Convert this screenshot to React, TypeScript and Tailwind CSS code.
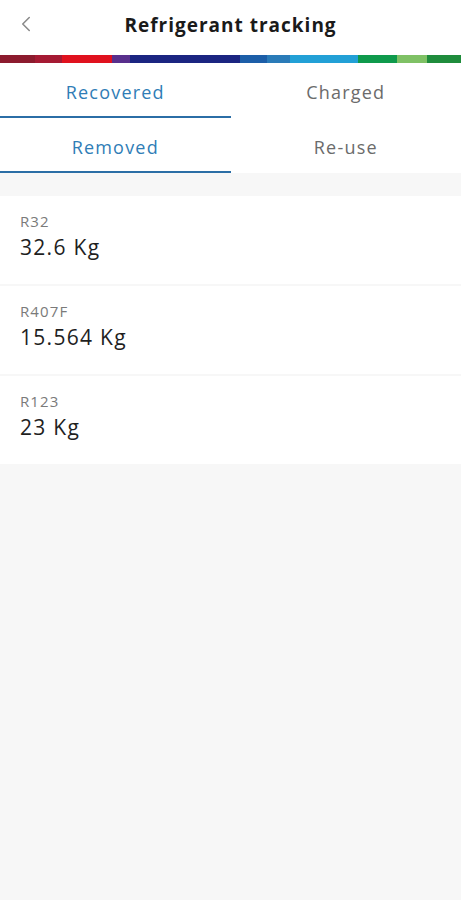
import { ChevronLeft } from "lucide-react";

const stripes = [
  { w: 35, c: "bg-[#8c1b2e]" },
  { w: 27, c: "bg-[#a51a33]" },
  { w: 50, c: "bg-[#e0111e]" },
  { w: 18, c: "bg-[#582f8c]" },
  { w: 110, c: "bg-[#1b2581]" },
  { w: 27, c: "bg-[#1c5ea8]" },
  { w: 23, c: "bg-[#2a7bb8]" },
  { w: 68, c: "bg-[#22a0d6]" },
  { w: 39, c: "bg-[#0f9a4c]" },
  { w: 30, c: "bg-[#7fc165]" },
  { w: 34, c: "bg-[#1f8c3c]" },
];

const items = [
  { name: "R32", amount: "32.6 Kg" },
  { name: "R407F", amount: "15.564 Kg" },
  { name: "R123", amount: "23 Kg" },
];

function Tab({ label, active }: { label: string; active?: boolean }) {
  return (
    <button
      className={
        active
          ? "flex h-[55px] flex-1 items-center justify-center border-b-2 border-[#2b6ea6] pt-[5px] text-[18px] tracking-[1.2px] text-[#2f7db6]"
          : "flex h-[55px] flex-1 items-center justify-center border-b-2 border-transparent pt-[5px] text-[18px] tracking-[1.2px] text-[#6b6b6b]"
      }
    >
      {label}
    </button>
  );
}

export default function App() {
  return (
    <div className="flex min-h-[900px] flex-col bg-[#f7f7f7] font-['Open_Sans',sans-serif]">
      <header className="relative flex h-[55px] items-center justify-center bg-white">
        <button className="absolute left-[13px] top-[11px] text-[#8a8a8a]">
          <ChevronLeft className="h-[26px] w-[26px]" strokeWidth={1.4} />
        </button>
        <h1 className="pb-[4px] text-[19px] font-bold tracking-[1px] text-[#1a1a1a]">Refrigerant tracking</h1>
      </header>
      <div className="flex h-[8px]">
        {stripes.map((s, i) => (
          <div key={i} className={s.c} style={{ width: s.w }} />
        ))}
      </div>
      <div className="bg-white">
        <div className="flex">
          <Tab label="Recovered" active />
          <Tab label="Charged" />
        </div>
        <div className="flex">
          <Tab label="Removed" active />
          <Tab label="Re-use" />
        </div>
      </div>
      <div className="mt-[23px] flex flex-col gap-[2px]">
        {items.map((it) => (
          <div key={it.name} className="h-[88px] bg-white px-[20px] pt-[14px]">
            <div className="text-[15px] tracking-[1.1px] text-[#7a7a7a]">{it.name}</div>
            <div className="text-[21px] leading-[28px] tracking-[1.3px] text-[#1f1f1f]">{it.amount}</div>
          </div>
        ))}
      </div>
    </div>
  );
}
